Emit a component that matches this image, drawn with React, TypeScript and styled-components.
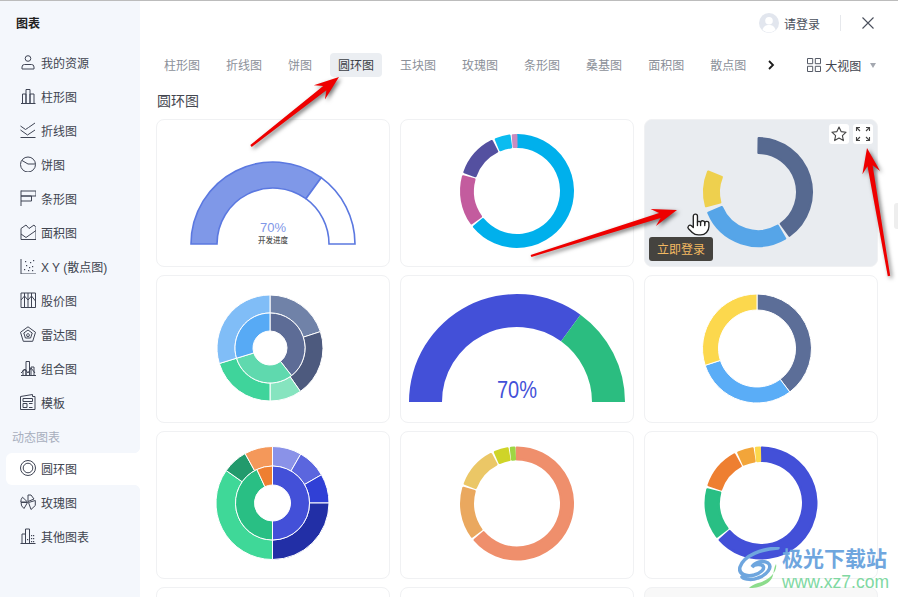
import React from "react";
import styled, { createGlobalStyle } from "styled-components";

const Global = createGlobalStyle`
  html, body { margin: 0; padding: 0; background: #fff; overflow: hidden; }
  * { box-sizing: border-box; }
  body { font-family: "Noto Sans CJK SC", "Liberation Sans", sans-serif; }
`;

const Page = styled.div`
  position: relative;
  width: 898px;
  height: 597px;
  overflow: hidden;
  display: flex;
  border-top: 1px solid #bcbcbc;
  background: #fff;
`;
const Sidebar = styled.aside`
  width: 140px;
  flex: none;
  background: #f4f7fc;
  padding-top: 13px;
`;
const SideTitle = styled.div`
  height: 17px;
  line-height: 17px;
  margin-left: 16px;
  font-size: 12px;
  font-weight: 700;
  color: #222;
`;
const SideList = styled.div`
  margin-top: 16px;
  padding-left: 6px;
  display: flex;
  flex-direction: column;
  gap: 2px;
`;
const SideItem = styled.div<{ $active?: boolean }>`
  position: relative;
  height: 32px;
  padding: 0 0 2px 14px;
  display: flex;
  align-items: center;
  gap: 5px;
  font-family: "Liberation Sans", "Noto Sans CJK SC", sans-serif;
  font-size: 12px;
  color: #40444f;
  background: ${(p) => (p.$active ? "#fff" : "transparent")};
  border-radius: ${(p) => (p.$active ? "6px 0 0 6px" : "0")};
  ${(p) =>
    p.$active
      ? `
    &::before, &::after {
      content: "";
      position: absolute;
      right: 0;
      width: 5px;
      height: 5px;
    }
    &::before { top: -5px; background: radial-gradient(circle at 0 0, #f4f7fc 4.6px, #fff 5px); }
    &::after { bottom: -5px; background: radial-gradient(circle at 0 100%, #f4f7fc 4.6px, #fff 5px); }
  `
      : ""}
`;
const SideLabel = styled.div`
  height: 30px;
  line-height: 32px;
  margin: 0 0 0 6px;
  font-size: 12px;
  color: #a7aebd;
`;
const Main = styled.main`
  flex: 1;
  min-width: 0;
  display: flex;
  flex-direction: column;
  padding-left: 16px;
`;
const Header = styled.header`
  height: 44px;
  flex: none;
  display: flex;
  align-items: center;
  justify-content: flex-end;
  padding-right: 24px;
  font-size: 12px;
  color: #4a4f5c;
`;
const Avatar = styled.span`
  width: 20px;
  height: 20px;
  display: block;
  margin-right: 5px;
`;
const Divider = styled.span`
  width: 1px;
  height: 16px;
  background: #e6e8ec;
  margin: 0 21px 0 20px;
`;
const TabRow = styled.nav`
  margin-top: 8px;
  height: 24px;
  flex: none;
  display: flex;
  align-items: center;
`;
const Tabs = styled.div`
  display: flex;
  gap: 10px;
`;
const Tab = styled.div<{ $active?: boolean }>`
  height: 24px;
  line-height: 24px;
  padding: 0 8px;
  border-radius: 4px;
  font-size: 12px;
  color: ${(p) => (p.$active ? "#3a3d44" : "#8b9099")};
  background: ${(p) => (p.$active ? "#ebeef2" : "transparent")};
`;
const Chevron = styled.span`
  width: 10px;
  margin-left: 13px;
  display: flex;
`;
const ViewSwitch = styled.div`
  margin-left: 30px;
  display: flex;
  align-items: center;
  gap: 4px;
  font-size: 12px;
  color: #41454f;
`;
const Caret = styled.span`
  width: 0;
  height: 0;
  margin-left: 5px;
  border-left: 3.5px solid transparent;
  border-right: 3.5px solid transparent;
  border-top: 5px solid #a4a8b0;
`;
const Heading = styled.h2`
  margin: 13px 0 0 1px;
  height: 20px;
  line-height: 20px;
  font-size: 14px;
  font-weight: 400;
  color: #444750;
`;
const Grid = styled.div`
  margin-top: 9px;
  display: grid;
  grid-template-columns: repeat(3, 234px);
  grid-auto-rows: 148px;
  gap: 8px 10px;
`;
const Card = styled.div<{ $tone?: string }>`
  position: relative;
  border: 1px solid #f0f1f3;
  border-radius: 8px;
  background: ${(p) => p.$tone || "#fff"};
  overflow: visible;
`;
const ChartSvg = styled.svg`
  display: block;
  width: 232px;
  height: 146px;
`;
const CardTools = styled.div`
  position: absolute;
  top: 4px;
  right: 4px;
  display: flex;
  gap: 4px;
`;
const ToolBtn = styled.span`
  width: 20px;
  height: 20px;
  background: #fff;
  border-radius: 3px;
  display: flex;
  align-items: center;
  justify-content: center;
`;
const Tooltip = styled.div`
  position: absolute;
  left: 4px;
  top: 117px;
  width: 64px;
  height: 24px;
  line-height: 24px;
  text-align: center;
  font-size: 12px;
  color: #f2b962;
  background: #45433f;
  border-radius: 3px;
`;
const Overlay = styled.svg`
  position: absolute;
  left: 0;
  top: -1px;
  width: 898px;
  height: 597px;
  pointer-events: none;
  filter: drop-shadow(2px 2px 2px rgba(0, 0, 0, 0.55));
`;
const Scroller = styled.div`
  position: absolute;
  right: 0;
  top: 202px;
  width: 4px;
  height: 26px;
  background: #eeeeee;
  border-radius: 3px 0 0 3px;
`;
const Hand = styled.svg`
  position: absolute;
  left: 686px;
  top: 211px;
  width: 25px;
  height: 25px;
`;
const Watermark = styled.div`
  position: absolute;
  left: 738px;
  top: 546px;
  width: 160px;
  height: 44px;
  display: flex;
  gap: 2px;
`;
const WmText = styled.div`
  display: flex;
  flex-direction: column;
  margin-top: -4px;
`;
const WmName = styled.span`
  font-size: 21px;
  line-height: 28px;
  font-weight: 700;
  color: #6fa6de;
  white-space: nowrap;
`;
const WmUrl = styled.span`
  font-family: "Liberation Sans", sans-serif;
  font-size: 17.5px;
  line-height: 18px;
  margin-top: 2px;
  color: #80d8a2;
  white-space: nowrap;
`;

type Seg = [number, number, string];
function pt(cx: number, cy: number, r: number, a: number) {
  const t = (a * Math.PI) / 180;
  return `${(cx + r * Math.sin(t)).toFixed(2)} ${(cy - r * Math.cos(t)).toFixed(2)}`;
}
function sector(cx: number, cy: number, r0: number, r1: number, a0: number, a1: number) {
  const large = a1 - a0 > 180 ? 1 : 0;
  return `M${pt(cx, cy, r1, a0)}A${r1} ${r1} 0 ${large} 1 ${pt(cx, cy, r1, a1)}L${pt(cx, cy, r0, a1)}A${r0} ${r0} 0 ${large} 0 ${pt(cx, cy, r0, a0)}Z`;
}
const Ring = ({ cx, cy, r0, r1, segs, sep, round }: { cx: number; cy: number; r0: number; r1: number; segs: Seg[]; sep?: string; round?: boolean }) => (
  <>
    {segs.map(([a, b, c], i) =>
      round ? (
        <path key={i} d={sector(cx, cy, r0 + 1.2, r1 - 1.2, a + 0.8, b - 0.8)} fill={c} stroke={c} strokeWidth={2.4} strokeLinejoin="round" />
      ) : (
        <path key={i} d={sector(cx, cy, r0, r1, a, b)} fill={c} stroke={sep || "none"} strokeWidth={sep ? 1 : 0} />
      )
    )}
  </>
);

const Chart = ({ children }: { children: React.ReactNode }) => <ChartSvg viewBox="1 1 232 146">{children}</ChartSvg>;

const charts: React.ReactNode[] = [
  <Chart key="1">
    <path d={sector(117, 125, 56, 82, -90, 36)} fill="#7f98e8" stroke="#5b78e0" strokeWidth={1.6} />
    <path d={sector(117, 125, 56, 82, 36, 90)} fill="#fff" stroke="#5b78e0" strokeWidth={1.6} />
    <text x={117} y={113} textAnchor="middle" fontSize={13} fill="#7f98e8" fontFamily="Liberation Sans, sans-serif">70%</text>
    <text x={117} y={124} textAnchor="middle" fontSize={7.5} fontWeight={500} fill="#555" fontFamily="Noto Sans CJK SC, sans-serif">开发进度</text>
  </Chart>,
  <Chart key="2">
    <Ring cx={117} cy={72} r0={43} r1={57} round segs={[[0, 231, "#00b0ec"], [234, 286, "#c35c9e"], [289, 334, "#5450a0"], [337, 353, "#0bbcf0"], [355, 360, "#c88cc0"]]} />
  </Chart>,
  <Chart key="3">
    <Ring cx={114} cy={73} r0={38} r1={55} round segs={[[0, 145, "#566990"], [149, 248, "#56a5e8"], [254, 293, "#eed04e"]]} />
  </Chart>,
  <Chart key="4">
    <Ring cx={114} cy={73} r0={35} r1={53} sep="#fff" segs={[[0, 72, "#7082a8"], [72, 145, "#4d5a7e"], [145, 180, "#86e4bf"], [180, 253, "#3fd49b"], [253, 360, "#80bdf7"]]} />
    <Ring cx={114} cy={73} r0={17} r1={35} sep="#fff" segs={[[0, 142, "#5d6c96"], [142, 253, "#5fd9ae"], [253, 360, "#57aaf5"]]} />
  </Chart>,
  <Chart key="5">
    <path d={sector(117, 127, 75, 108, -90, 36)} fill="#4350d8" />
    <path d={sector(117, 127, 75, 108, 36, 90)} fill="#2bbd80" />
    <text x={117} y={123} textAnchor="middle" fontSize={23} fill="#4350d8" fontFamily="Liberation Sans, sans-serif" textLength={40} lengthAdjust="spacingAndGlyphs">70%</text>
  </Chart>,
  <Chart key="6">
    <Ring cx={113} cy={73.5} r0={38.5} r1={54.5} sep="#fff" segs={[[0, 143, "#5c6e98"], [143, 252, "#5aadf7"], [252, 360, "#fcd84d"]]} />
  </Chart>,
  <Chart key="7">
    <Ring cx={116.5} cy={72} r0={37} r1={56.5} sep="#fff" segs={[[0, 30, "#8a92e8"], [30, 60, "#5b66de"], [60, 90, "#3040d6"], [90, 180, "#222fa6"], [180, 305, "#3fd898"], [305, 331, "#229a6c"], [331, 360, "#f4985a"]]} />
    <Ring cx={116.5} cy={72} r0={18} r1={37} sep="#fff" segs={[[0, 180, "#4350d8"], [180, 335, "#29bf84"], [335, 360, "#ee7f31"]]} />
  </Chart>,
  <Chart key="8">
    <Ring cx={117} cy={72.5} r0={43} r1={57} round segs={[[-1, 230, "#ef8f6c"], [233, 287, "#eaa85f"], [290, 333, "#ebc766"], [336, 351, "#cfd428"], [353, 358, "#9ed644"]]} />
  </Chart>,
  <Chart key="9">
    <Ring cx={117} cy={72} r0={41} r1={56.5} round segs={[[0, 229, "#4350d8"], [232, 285, "#29bf84"], [288, 332, "#ee7f31"], [335, 352, "#f2a53a"], [354, 359.5, "#fcd84d"]]} />
  </Chart>,
];

const IconSvg = styled.svg`
  flex: none;
  width: 16px;
  height: 16px;
  fill: none;
  stroke: #3f4454;
  stroke-width: 1;
`;
const icon = (d: string, extra?: React.ReactNode) => (
  <IconSvg viewBox="0 0 16 16">
    <path d={d} />
    {extra}
  </IconSvg>
);
const dots = (pts: number[][]) => pts.map(([x, y], i) => <rect key={i} x={x} y={y} width="1.2" height="1.2" fill="#3f4454" stroke="none" />);

const sideTop: [string, React.ReactNode][] = [
  ["我的资源", icon("M2 15v-2a2.5 2.5 0 0 1 2.5-2.5h7A2.5 2.5 0 0 1 14 13v2zM10.8 4.500a2.8 2.8 0 1 1-5.600 0 2.800 2.800 0 0 1 5.600 0z")],
  ["柱形图", icon("M1 15.500h14.500M2.500 15.500V6h3.500v9.500M6 15.500V1.500h4v14M10 15.500V6h4v9.500")],
  ["折线图", icon("M.5 4l5 3.500 3-2L15 1M.5 8l7 5L15 8M.5 15.500h15")],
  ["饼图", icon("M15.500 8.500a7.500 7.500 0 1 1-15 0 7.500 7.500 0 0 1 15 0zM2 4.500l6 3.500h7.300")],
  ["条形图", icon("M1 .5v16M1 1h15v5H1M1 6h10.500v5H1")],
  ["面积图", icon("M1 15.500V4.500L6 1l3 3.500L14 1l2 2.500v12zM1 10l5 3.500 10-7")],
  ["X Y (散点图)", icon("M1 1v15h15", dots([[4, 11], [6, 7], [8, 12], [10, 4], [12, 8], [13, 2], [5, 3], [9, 9], [12, 12]]))],
  ["股价图", icon("M1 15.500V1h14.500v14.500zM4.500 1v14.500M8 1v14.500M11.500 1v14.500M1 8l3.500-4L8 8l3.500-4 4 5")],
  ["雷达图", icon("M8 .8l7.500 5.500-2.800 9H3.300L.5 6.300zM8 4l4.200 3-1.600 5H5.400L3.800 7zM8 7.500l1.500 1.200-.6 1.800H7.100l-.6-1.800z")],
  ["组合图", icon("M1 15.500h15M3 15.500V10h3v5.500M6 15.500V1.500h3.500v14M11 15.500V7h3v8.500M1 13l4-4 3 4 3-5 4 5")],
  ["模板", icon("M.5 2.500l12-2v2h2.500v13H.5zM3 4.500h9.500v3H3zM3 9.500h4v4H3zM9 9.500h3.500M9 13.500h3.500")],
];
const sideBottom: [string, React.ReactNode, boolean][] = [
  ["圆环图", icon("M15.500 8a7.500 7.500 0 1 1-15 0 7.500 7.500 0 0 1 15 0zM12.800 8a4.800 4.800 0 1 1-9.600 0 4.800 4.800 0 0 1 9.600 0z"), true],
  ["玫瑰图", icon("M7.500 8L2.500 3.200A7 7 0 0 0 .8 8zM7.500 8.500H1a7 7 0 0 0 3 6zM8 7.500V1l3 0 3 4zM8.500 8.500l6.800-2v5L11 15.500z"), false],
  ["其他图表", icon("M.5 15.500h15M2 15.500V6h3.500v9.500M5.500 15.500V1h4v14.500", dots([[11, 7], [13, 7], [11, 10], [13, 10], [11, 13], [13, 13], [7, 11]])), false],
];
const tabs = ["柱形图", "折线图", "饼图", "圆环图", "玉块图", "玫瑰图", "条形图", "桑基图", "面积图", "散点图"];

function arrow(tx: number, ty: number, bx: number, by: number) {
  const L = Math.hypot(tx - bx, ty - by);
  const ux = (tx - bx) / L, uy = (ty - by) / L;
  const nx = -uy, ny = ux;
  const P = (d: number, w: number) => `${(tx - ux * d + nx * w).toFixed(1)},${(ty - uy * d + ny * w).toFixed(1)}`;
  return [P(L, 1.2), P(18, 2.6), P(25, 9), P(0, 0), P(25, -9), P(18, -2.6), P(L, -1.2)].join(" ");
}

export default function App() {
  return (
    <Page>
      <Global />
      <Sidebar>
        <SideTitle>图表</SideTitle>
        <SideList>
          {sideTop.map(([t, i]) => (
            <SideItem key={t}>
              {i}
              {t}
            </SideItem>
          ))}
          <SideLabel>动态图表</SideLabel>
          {sideBottom.map(([t, i, a]) => (
            <SideItem key={t} $active={a}>
              {i}
              {t}
            </SideItem>
          ))}
        </SideList>
      </Sidebar>
      <Main>
        <Header>
          <Avatar>
            <svg width="20" height="20" viewBox="0 0 20 20">
              <circle cx="10" cy="10" r="10" fill="#e2e6ee" />
              <circle cx="10" cy="7.800" r="3.800" fill="#fff" />
              <path d="M3.500 17c1-4 3.500-5 6.500-5s5.500 1 6.500 5a10 10 0 0 1-13 0z" fill="#fff" />
            </svg>
          </Avatar>
          请登录
          <Divider />
          <svg width="12" height="12" viewBox="0 0 12 12" stroke="#4a4f5c" strokeWidth="1.1" fill="none">
            <path d="M.5.5l11 11M11.500.5l-11 11" />
          </svg>
        </Header>
        <TabRow>
          <Tabs>
            {tabs.map((t) => (
              <Tab key={t} $active={t === "圆环图"}>
                {t}
              </Tab>
            ))}
          </Tabs>
          <Chevron>
            <svg width="8" height="10" viewBox="0 0 8 10" fill="none" stroke="#1c1c1c" strokeWidth="1.8">
              <path d="M2 1l4 4-4 4" />
            </svg>
          </Chevron>
          <ViewSwitch>
            <svg width="14" height="14" viewBox="0 0 14 14" fill="none" stroke="#555a66" strokeWidth="1">
              <path d="M.5.5h5.200v5.200H.5zM8.300.5h5.200v5.200H8.300zM.5 8.300h5.200v5.200H.5zM8.300 8.300h5.200v5.200H8.300z" />
            </svg>
            大视图
            <Caret />
          </ViewSwitch>
        </TabRow>
        <Heading>圆环图</Heading>
        <Grid>
          {charts.map((c, i) => (
            <Card key={i} $tone={i === 2 ? "#e9ecf0" : undefined}>
              {c}
              {i === 2 && (
                <>
                  <CardTools>
                    <ToolBtn>
                      <svg width="16" height="16" viewBox="0 0 16 16" fill="none" stroke="#444" strokeWidth="1.1" strokeLinejoin="round">
                        <path d="M8 1l2.100 4.600 5 .6-3.700 3.400 1 5L8 12.100 3.600 14.600l1-5L.9 6.200l5-.6z" />
                      </svg>
                    </ToolBtn>
                    <ToolBtn>
                      <svg width="16" height="16" viewBox="0 0 16 16" fill="none" stroke="#444" strokeWidth="1.1">
                        <path d="M1.500 5V1.500H5M1.500 1.500l3.500 3.500M11 1.500h3.500V5M14.500 1.500L11 5M1.500 11v3.500H5M1.500 14.500L5 11M14.500 11v3.500H11M14.500 14.500L11 11" />
                      </svg>
                    </ToolBtn>
                  </CardTools>
                  <Tooltip>立即登录</Tooltip>
                </>
              )}
            </Card>
          ))}
          <Card />
          <Card />
          <Card $tone="#f8f8f8" />
        </Grid>
      </Main>
      <Scroller />
      <Hand viewBox="0 0 24 24" fill="#fff" stroke="#222" strokeWidth="1.3" strokeLinecap="round" strokeLinejoin="round">
        <path d="M18 11a2 2 0 1 1 4 0v3a8 8 0 0 1-8 8h-2c-2.800 0-4.500-.86-5.990-2.340l-3.600-3.600a2 2 0 0 1 2.830-2.820L7 15V4a2 2 0 0 1 4 0v5.500a2 2 0 0 1 3 .5 2 2 0 0 1 4 1z" />
        <path d="M11 9.500V13M14 10v3M18 11v2" />
      </Hand>
      <Overlay viewBox="0 0 898 597">
        <polygon points={arrow(339, 77, 251, 146)} fill="#ee0000" />
        <polygon points={arrow(677, 210, 531, 256)} fill="#ee0000" />
        <polygon points={arrow(867, 148, 889, 276)} fill="#ee0000" />
      </Overlay>
      <Watermark>
        <svg width="42" height="42" viewBox="0 0 42 42" fill="none">
          <path d="M40 1C24 2 6 8 2 20c-2 7 6 10 14 8 7-2 11-6 9-9-2-2-8-2-11 1 3-5 11-7 16-4 5 4-1 12-10 15C15 33 7 33 4 30" stroke="#6fa6de" strokeWidth="3.500" strokeLinecap="round" />
          <path d="M38 17c2 8-8 17-18 19-4 1-7 3-9 5 8 0 22-3 24-13 1-4 1-8 3-11z" fill="#8cdc8c" />
        </svg>
        <WmText>
          <WmName>极光下载站</WmName>
          <WmUrl>www.xz7.com</WmUrl>
        </WmText>
      </Watermark>
    </Page>
  );
}
